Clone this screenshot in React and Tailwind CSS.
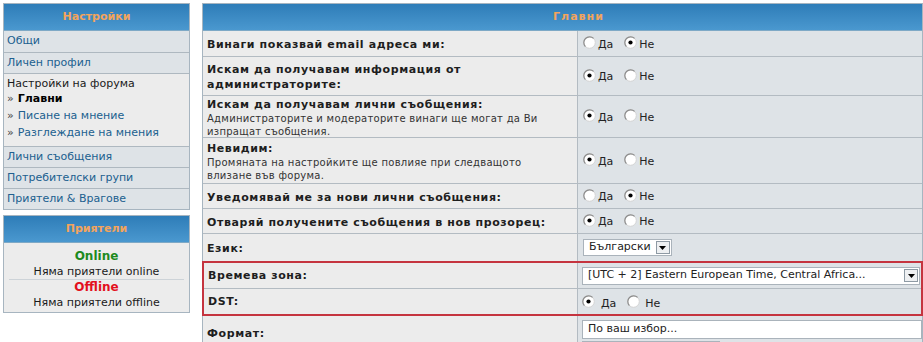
import React from "react";

function Radio({ checked }) {
  return (
    <svg width="13" height="13" viewBox="0 0 13 13" className="shrink-0 mb-[5px]">
      <circle cx="6.5" cy="6.5" r="5.8" fill="#fff" stroke="#d4d4d4" strokeWidth="1" />
      <path d="M2.4 10.6 A5.8 5.8 0 0 1 10.6 2.4" fill="none" stroke="#8c8c8c" strokeWidth="1.2" />
      {checked && <circle cx="6.5" cy="6.5" r="2.1" fill="#000" />}
    </svg>
  );
}

function YesNo({ yes, wide }) {
  return (
    <div className="flex items-center text-[11px] text-[#222] mt-[3px]">
      <Radio checked={yes} />
      <span className={wide ? "ml-[6px]" : "ml-[2px]"}>Да</span>
      <span className="ml-[11px] flex">
        <Radio checked={!yes} />
      </span>
      <span className={wide ? "ml-[5px]" : "ml-[2px]"}>Не</span>
    </div>
  );
}

function DropBtn() {
  return (
    <span className="w-[14px] h-[13px] border border-[#8e9aa4] bg-[#eef0f2] flex items-center justify-center shrink-0">
      <svg width="7" height="4" viewBox="0 0 7 4">
        <path d="M0 0H7L3.5 4Z" fill="#000" />
      </svg>
    </span>
  );
}

function Header({ children, className = "" }) {
  return (
    <div className={`h-[27px] flex items-center justify-center bg-gradient-to-b from-[#2e7db8] to-[#4a98cf] text-[#f3a45c] font-bold text-[11px] border-b border-[#7ea9c6] ${className}`}>
      {children}
    </div>
  );
}

function Row({ h, label, explain, children, last }) {
  return (
    <div className={`flex ${h} ${last ? "" : "border-b border-[#b3bbc2]"}`}>
      <div className="w-[375px] shrink-0 border-r border-[#b3bbc2] bg-[#ececec] px-[4px] pt-[2px] flex flex-col justify-center">
        <div className="font-bold text-[11px] leading-[15px] tracking-[0.6px] text-[#1e1e1e]">{label}</div>
        {explain && <div className="text-[10px] leading-[13px] tracking-[0.28px] text-[#333]">{explain}</div>}
      </div>
      <div className="flex-1 bg-[#dee3e7] pl-[5px] flex items-center">{children}</div>
    </div>
  );
}

function SideItem({ children, h = "h-[21px]", last }) {
  return (
    <div className={`${h} flex items-center pl-[3px] bg-[#dee3e7] text-[#20608f] ${last ? "" : "border-b border-[#aeb8c0]"}`}>
      {children}
    </div>
  );
}

export default function App() {
  return (
    <div className="w-[923px] h-[342px] overflow-hidden bg-white flex items-start pt-[3px] pl-[3px] text-[11px] font-['DejaVu_Sans',Verdana,sans-serif]">
      {/* Left column */}
      <div className="w-[187px] shrink-0 flex flex-col">
        <div className="border border-[#a7b5c0]">
          <Header>Настройки</Header>
          <SideItem h="h-[22px]">Общи</SideItem>
          <SideItem>Личен профил</SideItem>
          <div className="bg-[#ececec] border-b border-[#aeb8c0] pl-[3px] pt-[3px] pb-[4px]">
            <div className="leading-[14px] text-[#1a1a1a]">Настройки на форума</div>
            <div className="h-[17px] flex items-center">
              <span className="text-[#444] mr-[4px]">»</span>
              <span className="font-bold text-black">Главни</span>
            </div>
            <div className="h-[17px] flex items-center">
              <span className="text-[#444] mr-[4px]">»</span>
              <span className="text-[#20608f]">Писане на мнение</span>
            </div>
            <div className="h-[17px] flex items-center">
              <span className="text-[#444] mr-[4px]">»</span>
              <span className="text-[#20608f]">Разглеждане на мнения</span>
            </div>
          </div>
          <SideItem>Лични съобщения</SideItem>
          <SideItem>Потребителски групи</SideItem>
          <SideItem h="h-[20px]" last>Приятели &amp; Врагове</SideItem>
        </div>

        <div className="border border-[#a7b5c0] mt-[5px]">
          <Header>Приятели</Header>
          <div className="bg-[#ececec] pt-[6px] pb-[2px] text-center">
            <div className="leading-[15px] font-bold text-[12px] text-[#1d8a1d]">Online</div>
            <div className="leading-[15px] text-[#1a1a1a]">Няма приятели online</div>
            <div className="mx-[5px] border-t border-[#cdd3d8]" />
            <div className="leading-[15px] font-bold text-[12px] text-[#e3101c]">Offline</div>
            <div className="leading-[15px] text-[#1a1a1a]">Няма приятели offline</div>
          </div>
        </div>
      </div>

      {/* Right panel */}
      <div className="ml-[12px] w-[721px] shrink-0 border border-[#a7b5c0] border-b-0">
        <Header className="pl-[32px] tracking-[1px]">Главни</Header>
        <Row h="h-[26px]" label="Винаги показвай email адреса ми:">
          <YesNo yes={false} />
        </Row>
        <Row
          h="h-[39px]"
          label={
            <>
              Искам да получавам информация от
              <br />
              администраторите:
            </>
          }
        >
          <YesNo yes={true} />
        </Row>
        <Row
          h="h-[42px]"
          label="Искам да получавам лични съобщения:"
          explain={
            <>
              Администраторите и модераторите винаги ще могат да Ви
              <br />
              изпращат съобщения.
            </>
          }
        >
          <YesNo yes={true} />
        </Row>
        <Row
          h="h-[46px]"
          label="Невидим:"
          explain={
            <>
              Промяната на настройките ще повлияе при следващото
              <br />
              влизане във форума.
            </>
          }
        >
          <YesNo yes={true} />
        </Row>
        <Row h="h-[25px]" label="Уведомявай ме за нови лични съобщения:">
          <YesNo yes={false} />
        </Row>
        <Row h="h-[25px]" label="Отваряй получените съобщения в нов прозорец:">
          <YesNo yes={true} />
        </Row>
        <Row h="h-[27px]" label="Език:" last>
          <div className="h-[17px] bg-white border border-[#aab3bb] flex items-center pl-[5px] pr-[1px] gap-[5px] text-[11px] text-[#222]">
            <span>Български</span>
            <DropBtn />
          </div>
        </Row>

        <div className="border-2 border-[#c5343f] -mx-[1px]">
          <div className="flex h-[26px] border-b border-[#b3bbc2]">
            <div className="w-[374px] shrink-0 border-r border-[#b3bbc2] bg-[#ececec] px-[4px] pt-[2px] flex items-center font-bold tracking-[0.6px] text-[#1e1e1e]">
              Времева зона:
            </div>
            <div className="flex-1 bg-[#dee3e7] pl-[4px] pr-[1px] flex items-center">
              <div className="h-[18px] w-full bg-white border border-[#aab3bb] flex items-center justify-between pl-[5px] pr-[1px] text-[#222]">
                <span>[UTC + 2] Eastern European Time, Central Africa...</span>
                <DropBtn />
              </div>
            </div>
          </div>
          <div className="flex h-[25px]">
            <div className="w-[374px] shrink-0 border-r border-[#b3bbc2] bg-[#ececec] px-[4px] pt-[2px] flex items-center font-bold tracking-[0.6px] text-[#1e1e1e]">
              DST:
            </div>
            <div className="flex-1 bg-[#dee3e7] pl-[4px] flex items-center pt-[2px]">
              <YesNo yes={true} wide />
            </div>
          </div>
        </div>

        <div className="flex h-[60px]">
          <div className="w-[375px] shrink-0 border-r border-[#b3bbc2] bg-[#ececec] px-[4px] pt-[10px]">
            <div className="font-bold leading-[15px] tracking-[0.6px] text-[#1e1e1e]">Формат:</div>
            <div className="text-[10px] leading-[13px] tracking-[0.28px] text-[#333]">
              Синтаксисът е същият като при PHP функцията date().
            </div>
          </div>
          <div className="flex-1 bg-[#dee3e7] pl-[4px] pt-[4px] flex flex-col gap-[2px]">
            <div className="h-[19px] bg-white border border-[#aab3bb] flex items-center pl-[5px] text-[#222]">
              По ваш избор...
            </div>
            <div className="h-[18px] w-[138px] bg-white border border-[#aab3bb]" />
          </div>
        </div>
      </div>
    </div>
  );
}
